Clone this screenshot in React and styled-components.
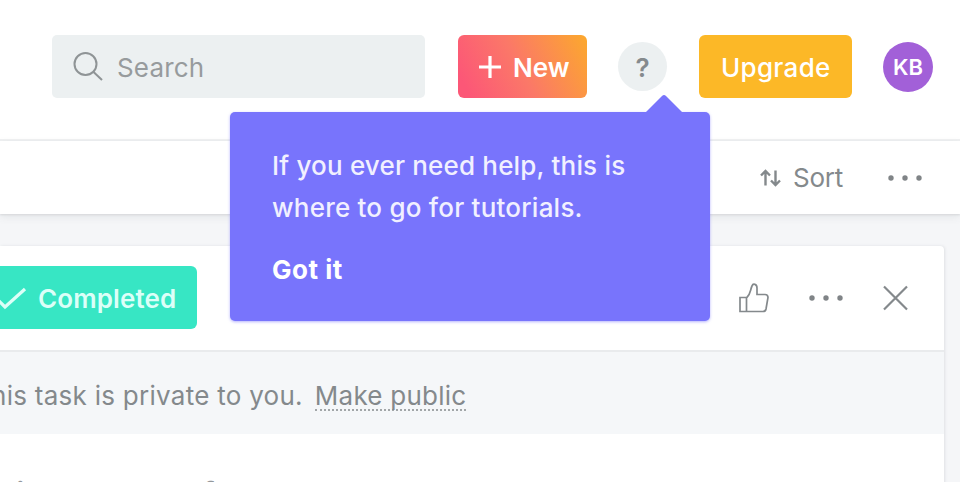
import React from 'react';
import styled, { createGlobalStyle } from 'styled-components';

const Global = createGlobalStyle`
  * { box-sizing: border-box; }
  body {
    margin: 0;
    overflow: hidden;
    background: #f5f6f8;
    font-family: Inter, Roboto, "Liberation Sans", sans-serif;
    color: #848a8e;
  }
  button { font: inherit; border: 0; padding: 0; background: none; color: inherit; }
`;

const Page = styled.div`
  position: relative;
  width: 960px;
  height: 482px;
  overflow: hidden;
`;

const Header = styled.header`
  display: flex;
  align-items: flex-start;
  height: 141px;
  padding: 35px 27px 0 52px;
  background: #fff;
  border-bottom: 2px solid #f0f1f2;
`;

const SearchBox = styled.div`
  display: flex;
  align-items: center;
  gap: 13px;
  width: 373px;
  height: 63px;
  padding-left: 21px;
  border-radius: 5px;
  background: #ecf0f1;
`;

const Label = styled.span`
  display: block;
  white-space: pre;
  padding-top: 2px;
  font-size: ${(p) => p.$size || 26}px;
  font-weight: ${(p) => p.$weight || 400};
  letter-spacing: ${(p) => p.$track || 0}px;
  line-height: 40px;
  color: ${(p) => p.$color || '#84898c'};
`;

const NewButton = styled.button`
  display: flex;
  align-items: center;
  gap: 12px;
  width: 129px;
  height: 63px;
  margin-left: 33px;
  padding-left: 21px;
  border-radius: 6px;
  background: linear-gradient(63deg, #fc5777 8%, #fb7868 48%, #fca72f 98%);
`;

const HelpButton = styled.button`
  display: flex;
  align-items: center;
  justify-content: center;
  width: 49px;
  height: 49px;
  margin: 7px 0 0 31px;
  border-radius: 50%;
  background: #ecf0f1;
`;

const UpgradeButton = styled.button`
  width: 153px;
  height: 63px;
  margin-left: 32px;
  padding-left: 22px;
  text-align: left;
  border-radius: 6px;
  background: #fcb827;
`;

const Avatar = styled.div`
  display: flex;
  align-items: center;
  justify-content: center;
  width: 50px;
  height: 50px;
  margin: 7px 0 0 31px;
  padding-bottom: 2px;
  border-radius: 50%;
  background: #a260d8;
`;

const Toolbar = styled.div`
  position: relative;
  display: flex;
  align-items: center;
  height: 73px;
  padding: 1px 0 0 760px;
  background: #fff;
  box-shadow: 0 1px 2px #d6d8da, 0 3px 8px rgba(80, 85, 95, 0.1);
`;

const SortButton = styled.button`
  display: flex;
  align-items: center;
  gap: 12px;
  width: 128px;
`;

const SortText = styled.span`
  margin-top: -2px;
`;

const TaskPane = styled.main`
  width: 944px;
  height: 240px;
  margin-top: 32px;
  background: #fff;
  border-radius: 0 4px 0 0;
  box-shadow: 1px 0 3px #dfe1e4;
`;

const TaskBar = styled.div`
  display: flex;
  align-items: center;
  height: 106px;
  padding-bottom: 1px;
  border-bottom: 2px solid #e9ebed;
`;

const CompletedButton = styled.button`
  display: flex;
  align-items: center;
  gap: 12px;
  width: 197px;
  height: 63px;
  margin-right: 542px;
  border-radius: 0 6px 6px 0;
  background: #37e6c4;
`;

const TaskActions = styled.div`
  display: flex;
  align-items: center;
  padding-top: 1px;
`;

const PrivacyNotice = styled.div`
  display: flex;
  align-items: flex-start;
  height: 82px;
  padding-top: 22px;
  background: #f5f7f9;
`;

const PrivacyText = styled.div`
  margin-left: -9px;
`;

const MakePublic = styled.a`
  height: 37px;
  margin-left: 12px;
  border-bottom: 2px dotted #a2a6a8;
`;

const TaskTitle = styled.h1`
  margin: 37px 0 0 -3px;
  font-size: 34px;
  line-height: 48px;
  font-weight: 500;
  white-space: pre;
  color: #94989c;
`;

const Tooltip = styled.div`
  position: absolute;
  left: 230px;
  top: 112px;
  width: 480px;
  height: 209px;
  padding: 32px 42px;
  border-radius: 5px;
  background: #7874fc;
  box-shadow: 0 1px 3px rgba(120, 116, 252, 0.55);
`;

const TooltipArrow = styled.svg`
  position: absolute;
  top: -18px;
  left: 414px;
`;

const Dismiss = styled.button`
  display: block;
  margin-top: 20px;
`;

const Icon = styled.svg`
  display: block;
  flex: none;
  fill: none;
  stroke: ${(p) => p.$color || '#84898c'};
  stroke-width: ${(p) => p.$stroke || 2};
  margin-left: ${(p) => p.$left || 0}px;
  overflow: visible;
`;

const Dots = ({ left }) => (
  <Icon width="34" height="6" $left={left}>
    {[3, 17, 31].map((x) => (
      <circle key={x} cx={x} cy="3" r="2.7" fill="#808487" stroke="none" />
    ))}
  </Icon>
);

export default function App() {
  return (
    <Page>
      <Global />
      <Header>
        <SearchBox>
          <Icon width="31" height="30" $color="#8f9496">
            <circle cx="12.5" cy="12" r="11" />
            <path d="M20.3 19.8 29 28" />
          </Icon>
          <Label $color="#979b9d" $track={0.15}>Search</Label>
        </SearchBox>
        <NewButton>
          <Icon width="22" height="22" $color="#fff" $stroke={3.2}>
            <path d="M11 0v22M0 11h22" />
          </Icon>
          <Label $color="#fff" $weight={600}>New</Label>
        </NewButton>
        <HelpButton><Label $weight={600} $color="#858a8d">?</Label></HelpButton>
        <UpgradeButton><Label $color="#fff" $weight={500} $track={0.3}>Upgrade</Label></UpgradeButton>
        <Avatar><Label $color="#fff" $weight={600} $size={22}>KB</Label></Avatar>
      </Header>
      <Toolbar>
        <SortButton>
          <Icon width="21" height="16" $stroke={2.4}>
            <path d="M5.500 15.500V2M1 5.500l4.500-4.500L10 5.500M15.500.5v14M11 10.500l4.500 4.500L20 10.500" />
          </Icon>
          <SortText><Label $track={-0.2}>Sort</Label></SortText>
        </SortButton>
        <Dots />
      </Toolbar>
      <TaskPane>
        <TaskBar>
          <CompletedButton>
            <Icon width="26" height="22" $color="#dcfff8" $stroke={3.2}>
              <path d="M-3 12 5 20 25 2" />
            </Icon>
            <Label $color="#dcfff8" $weight={600} $track={0.1}>Completed</Label>
          </CompletedButton>
          <TaskActions>
            <Icon width="30" height="30" $stroke={1.7}>
              <path d="M1 14.500H7.500V28.500H1ZM7.500 15C12 11 11 7 13 3C14 0 18 1 18 5V11.500H26Q29 11.500 29 14.500L27 26Q26.500 28.500 24 28.500H7.500" />
            </Icon>
            <Dots left={40} />
            <Icon width="24" height="24" $left={41} $stroke={2.2}>
              <path d="M0 .5 23 23.500M23 .5 0 23.500" />
            </Icon>
          </TaskActions>
        </TaskBar>
        <PrivacyNotice>
          <PrivacyText><Label $track={0.27}>his task is private to you.</Label></PrivacyText>
          <MakePublic><Label $track={0.25}>Make public</Label></MakePublic>
        </PrivacyNotice>
        <TaskTitle>kid to sense f</TaskTitle>
      </TaskPane>
      <Tooltip>
        <TooltipArrow width="40" height="19" viewBox="0 0 40 19">
          <path d="M1 19 18 2Q20 0 22 2L39 19Z" fill="#7874fc" />
        </TooltipArrow>
        <Label $color="#f1f0ff" $weight={500} $track={0.18}>If you ever need help, this is</Label>
        <Label $color="#f1f0ff" $weight={500} $track={0.22}>where to go for tutorials.</Label>
        <Dismiss><Label $color="#fff" $weight={700} $track={0.5}>Got it</Label></Dismiss>
      </Tooltip>
    </Page>
  );
}
